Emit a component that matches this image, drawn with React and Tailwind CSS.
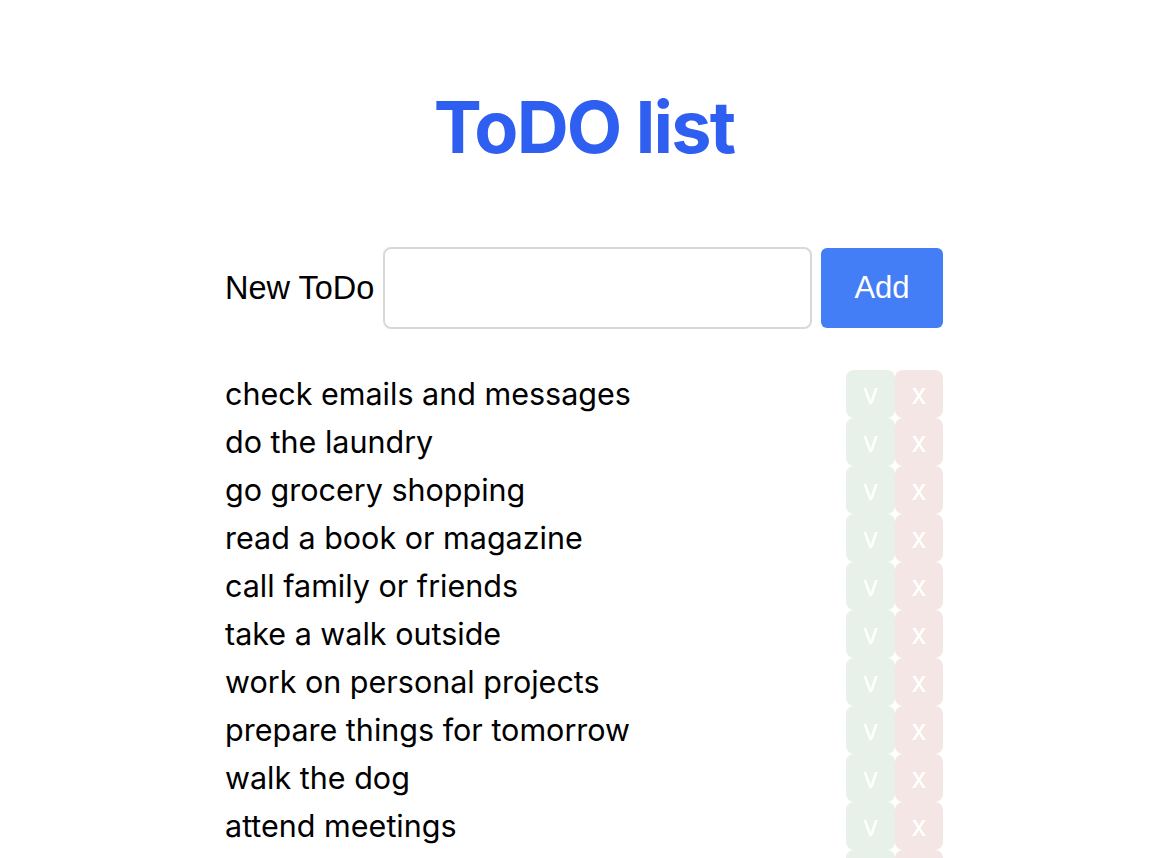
const todos = [
  "check emails and messages",
  "do the laundry",
  "go grocery shopping",
  "read a book or magazine",
  "call family or friends",
  "take a walk outside",
  "work on personal projects",
  "prepare things for tomorrow",
  "walk the dog",
  "attend meetings",
  "pay the bills",
];

const App = () => {
  return (
    <div className="h-screen overflow-hidden bg-white pl-[18px] font-['Inter',sans-serif]">
      <div className="mx-auto w-[718px]">
        {/* TITLE */}
        <h1 className="pt-[91px] text-center text-[72px] leading-none font-bold tracking-tight text-[#2f5ff0]">
          ToDO list
        </h1>

        {/* NEW TODO FORM */}
        <div className="mt-[84px] flex items-center">
          <label className="w-[148px] shrink-0 whitespace-nowrap text-[32.5px] text-black font-['Liberation_Sans',sans-serif]">
            New ToDo
          </label>
          <input
            type="text"
            className="ml-[10px] h-[82px] w-[429px] shrink-0 rounded-lg border-2 border-[#d6d8dc] bg-white px-3 text-[28px] outline-none"
          />
          <button className="ml-[9px] h-[80px] w-[122px] shrink-0 rounded-md bg-[#447ef6] text-[31px] text-white font-['Liberation_Sans',sans-serif]">
            Add
          </button>
        </div>

        {/* LIST */}
        <ul className="mt-[41px]">
          {todos.map((item) => (
            <li key={item} className="flex h-[48px] items-center justify-between">
              <span className="text-[30.5px] text-black">{item}</span>
              <div className="flex h-full">
                <button className="h-full w-[49px] rounded-lg bg-[#e8f0ea] text-[28px] text-white">
                  v
                </button>
                <button className="h-full w-[48px] rounded-lg bg-[#f5e6e6] text-[28px] text-white">
                  x
                </button>
              </div>
            </li>
          ))}
        </ul>
      </div>
    </div>
  );
};

export default App;
